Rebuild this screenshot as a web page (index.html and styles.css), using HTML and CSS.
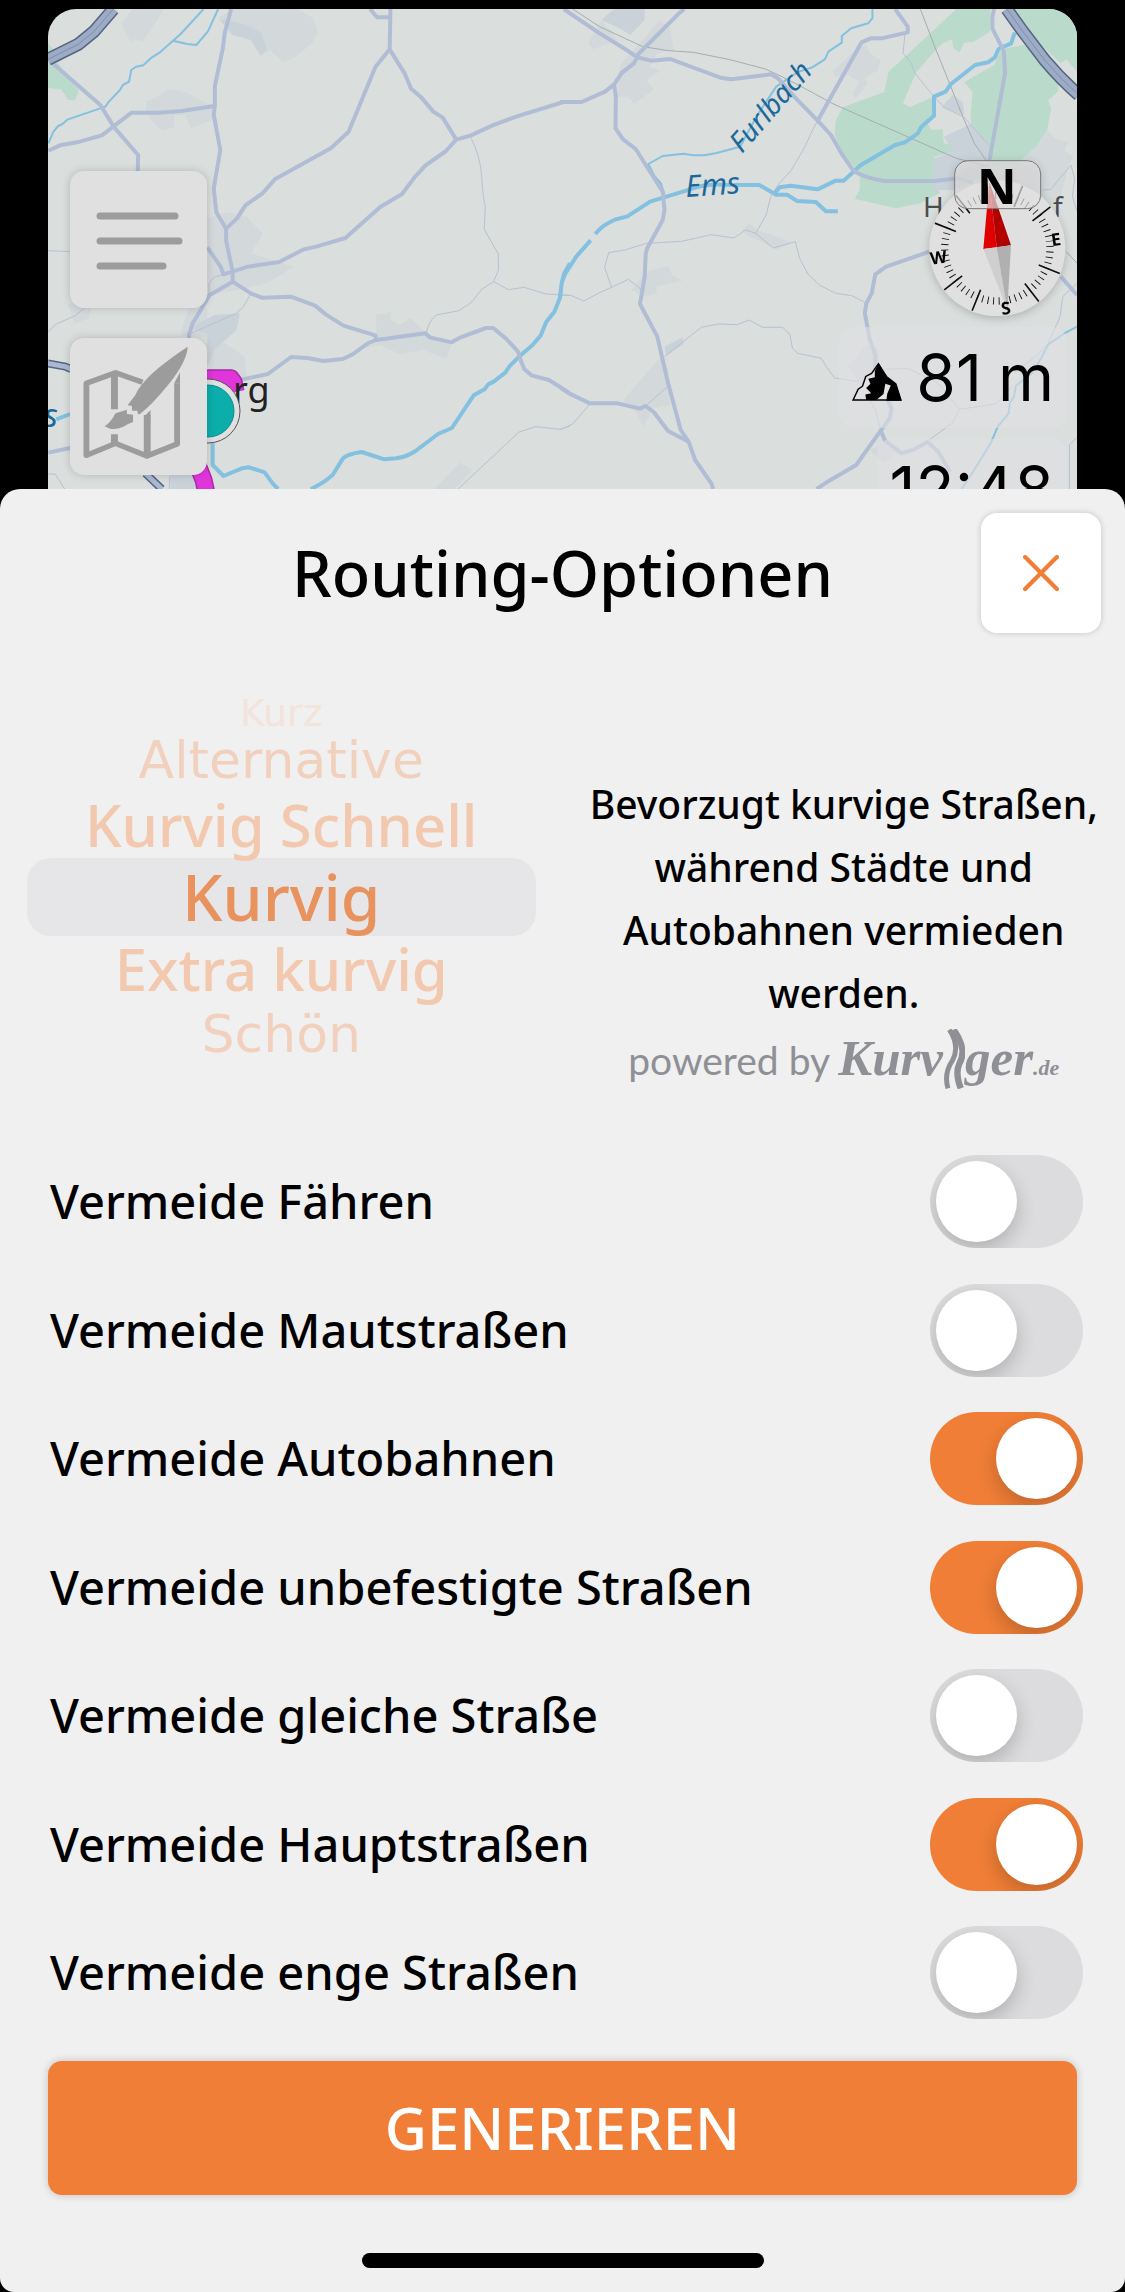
FILE: index.html
```html
<!DOCTYPE html>
<html lang="de">
<head>
<meta charset="utf-8">
<meta name="viewport" content="width=device-width, initial-scale=1">
<title>Routing-Optionen</title>
<link rel="stylesheet" href="styles.css">
</head>
<body>
<div class="stage">
  <div class="map">
    <svg class="map-canvas" viewBox="48 9 1029 480" preserveAspectRatio="xMidYMin slice" aria-hidden="true">
      <svg x="0" y="0" width="570" height="500" viewBox="0 0 1568 1500" preserveAspectRatio="none">
        <g class="forest">
          <path d="M132 130L150 150L175 135L205 150L160 190L217 270L207 300H188L168 268L132 264Z"/>
        </g>
        <g class="town">
          <path d="M333 70L365 27H450L430 65L402 108L392 125L372 118L358 125Z"/>
          <path d="M600 55L640 27H820L862 55L875 100L858 130L812 172L780 187L742 150L716 172L712 135L680 105L640 105Z"/>
          <path d="M402 305L440 285L466 266L515 278L560 305L590 318L585 360L525 385L510 345L480 345V380L446 392L425 370L402 340Z"/>
          <path d="M570 655L625 637L680 650L723 702L690 760L808 800L735 850L650 870L575 885Z"/>
          <path d="M185 910H255L245 955L205 970Z"/>
          <path d="M500 985L520 925H570V1010H500Z"/>
          <path d="M570 1030H620L672 1070L678 1130L590 1200Z"/>
          <path d="M1035 945L1075 935V960L1100 975L1130 955L1170 1000L1242 1030L1228 1077L1165 1050L1100 1062L1045 1035L1000 1045L1035 1010Z"/>
          <path d="M1195 1467L1265 1388L1300 1410L1250 1467Z"/>
        </g>
        <g class="town-core">
          <path d="M620 60L680 75L720 100L735 150L715 165L690 120L640 105L605 60Z"/>
          <path d="M520 985L590 945L660 940L650 990L590 1050L570 1100V1000Z"/>
          <path d="M466 1425H530L545 1467H470Z"/>
        </g>
        <g class="minor">
          <path d="M1295 412Q1322 470 1325 530Q1328 590 1335 620L1332 688L1371 762V810L1358 845L1325 868L1296 908L1262 932L1200 945Q1180 962 1172 1000"/>
          <path d="M1358 845L1398 869L1442 862L1502 882L1568 886"/>
          <path d="M132 752L193 755M132 995L155 972L205 948L235 922M575 885V850L590 830L615 825"/>
          <path d="M520 1003L650 940L668 922L690 882M1260 1467L1428 1296L1472 1280L1540 1288L1568 1278M132 1422H152L178 1467M466 1430V1467"/>
        </g>
        <g class="stream">
          <path d="M560 27L497 102L476 122L440 157L418 172L394 196L375 200L361 210L355 245L338 255L330 270L297 308L290 320L185 359L172 372L160 378L147 395L133 430"/>
          <path d="M600 27L572 94L540 135L515 132L476 122"/>
        </g>
        <g class="river">
          <path d="M1568 790L1552 820L1545 850L1540 895L1525 935L1503 965L1487 1007L1465 1035L1433 1065L1403 1097L1390 1118L1358 1145L1343 1153L1333 1168L1303 1186L1243 1284L1205 1302L1143 1353Q1120 1370 1090 1375L1057 1378L995 1356Q955 1362 943 1376L915 1425Q890 1450 855 1467"/>
          <path d="M585 1330V1395L615 1428L665 1405L685 1402L728 1417L750 1450L765 1467"/>
          <path d="M155 1258L193 1242"/>
        </g>
        <g class="road">
          <path d="M145 190L276 315L314 382L380 465L379 515M133 452L165 436L212 427L280 406L362 338H435L500 333L590 318"/>
          <path d="M636 27L618 100L613 145L591 258V318L588 345L606 450L588 565L595 637L622 686V722L640 815V845L577 885L530 970L520 1003V1015"/>
          <path d="M622 686L652 655L675 616L722 580L756 538L910 445L959 395L1033 200L1072 148L1074 27M1018 27L1037 52H1072"/>
          <path d="M1072 148L1113 220L1131 266L1157 290L1192 335L1218 353L1255 419L1227 453L1170 497L1142 530L1106 582L1046 621L950 714L870 740L836 748L768 786L682 800L615 823L607 800L570 742"/>
          <path d="M1255 419L1296 406L1355 376L1420 350L1550 306H1568"/>
          <path d="M640 845L690 880L720 893L800 890L867 917L897 944L945 977L1032 1006L1035 1020L1170 1000L1182 1012L1242 1027L1265 1013L1337 984H1357L1393 1017L1425 1055L1432 1080L1442 1107L1462 1126L1510 1140L1568 1180"/>
          <path d="M1035 1020L1013 1029L970 1063L943 1077L890 1083L845 1074L801 1071L737 1122L660 1140M133 1358L193 1344"/>
        </g>
        <g class="casing">
          <path d="M132 178L215 133L258 95L312 27"/>
        </g>
        <g class="motorway">
          <path d="M132 178L215 133L258 95L312 27"/>
        </g>
        <g class="lane"><path d="M132 178L215 133L258 95L312 27"/></g>
        <g class="casing casing-slim"><path d="M132 1090L180 1100L195 1107M400 1420L445 1467"/></g>
        <g class="motorway motorway-slim"><path d="M132 1090L180 1100L195 1107M400 1420L445 1467"/></g>
        <path class="track" d="M520 1160L575 1135H635L643 1147L648 1175M540 1385L560 1440L568 1480"/>
        <path class="track-fill" d="M520 1160L575 1135H635L643 1147L648 1175M540 1385L560 1440L568 1480"/>
      </svg>
      <svg x="560" y="0" width="565" height="500" viewBox="0 0 1568 1500" preserveAspectRatio="none">
        <g class="forest">
          <path d="M1100 27H1195L1193 95L1148 125L1122 128L1108 158L1092 145L1088 118L1062 130L1030 165L990 215L975 250L952 310L970 322L1038 290L1040 345L1020 370L1030 390L1062 388L1065 430L1092 435V455L1038 470V560L1055 578L1000 610L932 625L818 596L832 570V520L785 460L762 405L765 362L785 322L900 276L912 215Z"/>
          <path d="M1225 148L1285 135L1330 160L1385 220L1382 275L1355 300L1363 325L1352 390L1355 420L1320 445L1330 470L1270 488L1215 512L1150 485L1142 440L1140 340L1145 275L1122 247L1205 195Z"/>
          <path d="M1258 27H1435V215L1405 178L1390 190L1330 130Z"/>
        </g>
        <g class="town">
          <path d="M170 190L230 120L275 60L305 80L315 150L270 160L250 200L278 212L240 240L260 270L205 312L190 290L160 290V235Z"/>
          <path d="M115 60L78 130L92 148L160 120Z"/>
          <path d="M758 212L830 140L850 135L860 160L890 180L882 210L845 235L855 250L820 295L812 280L830 245L800 225L765 232Z"/>
          <path d="M505 690L525 670L548 690L590 705L640 728L600 750L560 725L515 705Z"/>
          <path d="M200 870L235 820L270 805L300 798L312 825L340 842L265 860L270 880L235 890Z"/>
          <path d="M175 1200L285 1065L300 1110L305 1215L260 1225L230 1280L213 1240Z"/>
          <path d="M1320 440L1350 390L1375 418L1410 425L1400 450L1425 470L1410 500L1390 590L1330 640H1200L1180 500L1270 490Z"/>
          <path d="M800 1100L850 1035L885 1050V1180L830 1150ZM860 1350L900 1330L940 1360L900 1390Z"/>
        </g>
        <g class="town-core">
          <path d="M115 60L150 27H235V60L195 105L165 85Z"/>
          <path d="M1058 322L1090 285L1118 308L1122 345Z"/>
          <path d="M1065 410L1140 372L1190 430V520L1100 570H1038V475L1092 455Z"/>
          <path d="M290 1040L340 1012L345 1030L295 1068Z"/>
        </g>
        <g class="minor">
          <path d="M715 362Q695 400 680 440L642 510L605 555L585 590L572 645L543 700L515 690L482 714L420 704L338 724L240 730L180 750L135 758L124 802L143 862L110 878L66 903L30 886L0 885M143 862L190 838L225 868"/>
          <path d="M543 700L592 744L653 725L665 775L688 822L720 855L765 880L810 887L848 908"/>
          <path d="M0 1290L35 1272L83 1212M235 1220L298 1160M290 1070L392 982L440 972L492 974L525 960L562 982H618L638 1003L645 1045L660 1060L725 1075L738 1098L762 1134L830 1145"/>
          <path d="M958 95L952 160L975 190L985 220L1038 290L1070 325L1120 350L1190 435M1340 570L1362 568L1418 495L1428 535L1422 590L1440 650M1435 850L1395 890L1388 950L1355 1030L1330 1060L1260 1120M905 1108L965 1105L1050 1150L1108 1228L1210 1212L1255 1160M1108 1228L1088 1270L1022 1322M1435 1312L1414 1335V1467M850 1180L875 1230L890 1290"/>
        </g>
        <g class="rail">
          <path d="M35 27L110 80L230 140Q300 155 370 157Q470 175 570 207Q640 240 755 310L1100 475L1190 500M1000 27L1040 140L1118 350L1150 430L1185 485M1405 755L1435 790"/>
        </g>
        <g class="stream">
          <path d="M867 27V55L855 70L808 85L782 108V128L745 155L735 178L700 202L660 216L600 260L545 350L500 440L432 460L400 466H370L343 461L285 468L245 492L262 528L280 550L290 585"/>
          <path d="M1435 980L1400 1000L1355 1033L1335 1075L1310 1120L1265 1158L1260 1190L1248 1210L1245 1240L1215 1280L1195 1330L1155 1400L1115 1467"/>
        </g>
        <g class="river">
          <path d="M0 895L2 855L15 820L45 770L85 721M98 702Q115 680 133 670L155 658L187 649L250 605L350 572Q400 550 450 554L553 555L600 584H630L658 603L710 606L738 634H771"/>
          <path d="M593 582L610 562L640 557L715 568L765 542H787L835 495L930 435L957 427L993 400L1003 380L1038 347V290L1070 275L1085 252L1152 195L1188 187L1207 172L1217 147L1252 130L1262 98"/>
        </g>
        <g class="road">
          <path d="M10 27L110 100L185 150L215 172L253 182L306 177L445 233L475 238L585 223L605 235L650 290L715 362L752 405L785 467L815 513Q850 535 900 543H1038L1105 535L1145 548"/>
          <path d="M215 165L330 40L345 27M215 172L205 190L172 218L150 253L125 275L60 306H0M150 253L155 290L154 385L175 418L210 447L285 575L290 630L285 660L242 745L238 760L235 830L222 912L270 1010L300 1150L335 1290L357 1325L375 1380L420 1450L425 1467"/>
          <path d="M0 1162L25 1180L83 1210H160L222 1226L237 1218L260 1236L300 1293L357 1325"/>
          <path d="M930 27L965 80V97L892 115H862L837 127L825 150L715 362M1205 27L1200 50V85L1232 155L1235 220L1192 480M1025 755L905 800L875 823L865 880L850 910L846 940L860 1020L875 1065V1120L920 1225L915 1255L890 1292L822 1395L740 1447L712 1467M890 1292L902 1322L948 1360L983 1348L1020 1326L1050 1355L1082 1415M1390 830L1435 885"/>
        </g>
        <g class="casing"><path d="M1240 27L1285 95L1345 180Q1390 238 1440 285"/></g>
        <g class="motorway"><path d="M1240 27L1285 95L1345 180Q1390 238 1440 285"/></g>
        <g class="lane"><path d="M1240 27L1285 95L1345 180Q1390 238 1440 285"/></g>
      </svg>
      <text class="water-label" x="686" y="197" font-size="30" transform="rotate(-4 686 197)">Ems</text>
      <text class="water-label" x="742" y="154" font-size="28" transform="rotate(-49 742 154)">Furlbach</text>
      <text class="water-label" x="44" y="427" font-size="32">s</text>
      <text class="place-label" x="923" y="217" font-size="28">H</text>
      <text class="place-label" x="1053" y="217" font-size="28">f</text>
      <text class="place-label place-label-strong" x="233" y="403" font-size="36">rg</text>
      <circle cx="208" cy="411" r="32" fill="#dfe0df" stroke="#555" stroke-width="1"/>
      <circle cx="208" cy="411" r="26" fill="#0baeab" stroke="#0b8d8d" stroke-width="1"/>
    </svg>

    <div class="map-tools">
      <button class="tool" type="button" aria-label="Menü">
        <svg viewBox="0 0 137 137" aria-hidden="true"><path d="M30 45H105M30 70H109M30 95H93" fill="none" stroke="#9c9c9c" stroke-width="7" stroke-linecap="round"/></svg>
      </button>
      <button class="tool" type="button" aria-label="Route zeichnen">
        <svg viewBox="193 1014 376 411" preserveAspectRatio="none" aria-hidden="true">
          <g fill="none" stroke="#9c9c9c" stroke-width="16" stroke-linejoin="round">
            <path d="M392 1147L318 1118L238 1150V1366L318 1330L404 1368L487 1332V1150"/>
            <path stroke-width="19" d="M315 1120V1228M315 1303V1332M405 1366V1245"/>
          </g>
          <g fill="#9c9c9c">
            <path d="M479 1150L495 1117V1150ZM396 1250L414 1230V1250Z"/>
            <path d="M516 1040Q514 1085 462 1155Q415 1218 384 1243L379 1241L378 1232H363V1218L351 1216L372 1186Q385 1150 440 1100Q482 1064 516 1040Z"/>
            <path d="M318 1240L349 1229V1242L366 1244V1266Q350 1272 338 1281Q318 1290 303 1286L288 1279Q303 1270 318 1240Z"/>
          </g>
        </svg>
      </button>
    </div>

    <div class="map-info">
      <svg class="compass" viewBox="75 45 426 483" role="img" aria-label="Kompass">
        <circle cx="292" cy="325" r="204" fill="#e0e0e0"/>
        <g transform="rotate(-8 292 325)" stroke="#111" fill="none">
          <circle cx="292" cy="325" r="158" stroke-width="22" pathLength="360" stroke-dasharray="1 5" stroke-dashoffset="0.5"/>
          <path stroke-width="5" d="M359 209L393 150M408 258L467 224M408 392L467 426M359 441L393 500M225 441L191 500M176 392L117 426M176 258L117 224M225 209L191 150"/>
        </g>
        <path fill="#e00000" d="M268 125L250 327L290 322Z"/>
        <path fill="#b20000" d="M268 125L290 322L333 316Z"/>
        <path fill="#cfcfcf" d="M250 327L290 322L322 508Z"/>
        <path fill="#b0b0b0" d="M290 322L333 316L322 508Z"/>
        <g class="compass-letters" font-size="52" text-anchor="middle">
          <text x="468" y="317" transform="rotate(-8 468 298)">E</text>
          <text x="115" y="371" transform="rotate(-8 115 352)">W</text>
          <text x="318" y="523" transform="rotate(-8 318 505)">S</text>
        </g>
        <rect x="164" y="62" width="258" height="144" rx="40" fill="#e0e0e0" fill-opacity=".7" stroke="#777" stroke-width="3"/>
        <text class="compass-letters" x="290" y="192" font-size="146" text-anchor="middle">N</text>
      </svg>
      <div class="readout">
        <svg class="peak" viewBox="813 1085 138 116" preserveAspectRatio="none" aria-hidden="true">
          <path d="M816 1198L830 1166L842 1157L851 1128L867 1119L886 1090L908 1128L934 1150L948 1198Z" fill="#e2e2e2" stroke="#000" stroke-width="4"/>
          <path d="M886 1088L908 1128L934 1150L950 1200H908L910 1180L920 1155L905 1150L900 1180L880 1198H852L850 1182L866 1178L852 1162L864 1150L858 1135L876 1130V1112Z"/>
        </svg>
        <span>81&#8197;m</span>
      </div>
      <div class="readout"><span>12:48</span></div>
    </div>
  </div>
</div>

<main class="sheet">
  <header class="sheet-head">
    <h1>Routing-Optionen</h1>
    <button class="close" type="button" aria-label="Schließen">
      <svg viewBox="0 0 34 34" aria-hidden="true"><path d="M2 2L32 32M32 2L2 32" fill="none" stroke="#f07e36" stroke-width="4" stroke-linecap="round"/></svg>
    </button>
  </header>

  <section class="profile">
    <fieldset class="wheel">
      <legend>Profil</legend>
      <label class="turn turn-far"><input type="radio" name="profil"><span>Kurz</span></label>
      <label class="turn turn-mid"><input type="radio" name="profil"><span>Alternative</span></label>
      <label class="turn turn-near"><input type="radio" name="profil"><span>Kurvig Schnell</span></label>
      <label class="turn turn-active"><input type="radio" name="profil" checked><span>Kurvig</span></label>
      <label class="turn turn-near"><input type="radio" name="profil"><span>Extra kurvig</span></label>
      <label class="turn turn-mid"><input type="radio" name="profil"><span>Schön</span></label>
    </fieldset>
    <div class="about">
      <p>Bevorzugt kurvige Straßen, während Städte und Autobahnen vermieden werden.</p>
      <div class="credit">
        <span class="credit-by">powered by</span>
        <span class="credit-brand">Kurv<svg viewBox="0 0 62 180" preserveAspectRatio="none" aria-hidden="true"><path d="M18 2C40 38 40 68 27 94C8 124 6 150 14 178" fill="none" stroke="#8f8f96" stroke-width="14"/><path d="M30 2C60 48 60 78 46 104C36 128 42 156 50 178" fill="none" stroke="#8f8f96" stroke-width="18"/></svg>ger<small>.de</small></span>
      </div>
    </div>
  </section>

  <div class="options">
    <label class="option"><span>Vermeide Fähren</span><input type="checkbox" role="switch"></label>
    <label class="option"><span>Vermeide Mautstraßen</span><input type="checkbox" role="switch"></label>
    <label class="option"><span>Vermeide Autobahnen</span><input type="checkbox" role="switch" checked></label>
    <label class="option"><span>Vermeide unbefestigte Straßen</span><input type="checkbox" role="switch" checked></label>
    <label class="option"><span>Vermeide gleiche Straße</span><input type="checkbox" role="switch"></label>
    <label class="option"><span>Vermeide Hauptstraßen</span><input type="checkbox" role="switch" checked></label>
    <label class="option"><span>Vermeide enge Straßen</span><input type="checkbox" role="switch"></label>
  </div>

  <button class="generate" type="button">GENERIEREN</button>
  <div class="home-bar"></div>
</main>
</body>
</html>
```

FILE: styles.css
```css
* { box-sizing: border-box; }

body {
  margin: 0;
  min-height: 100vh;
  display: flex;
  flex-direction: column;
  background: #000;
  color: #000;
  font-family: "Noto Sans", "Open Sans", sans-serif;
  font-weight: 500;
}

button { font: inherit; border: 0; padding: 0; }

/* Map behind the sheet */
.stage { padding: 9px 48px 0; }

.map {
  position: relative;
  height: 480px;
  overflow: hidden;
  border-radius: 28px 28px 0 0;
  background: #dadedd;
}

.map-canvas { display: block; width: 100%; height: 100%; }
.map-canvas path { vector-effect: non-scaling-stroke; }
.forest { fill: #badacb; }
.town { fill: #d3d8da; }
.town-core { fill: #cad2d9; }
.minor, .rail, .stream, .river, .road, .casing, .motorway, .lane, .track, .track-fill {
  fill: none;
  stroke-linejoin: round;
}
.minor { stroke: #b9c0d2; stroke-width: 1px; }
.rail { stroke: #a5adb0; stroke-width: 1px; }
.stream { stroke: #84c0df; stroke-width: 2px; }
.river { stroke: #84c0e0; stroke-width: 4px; }
.road { stroke: #b0bdd5; stroke-width: 4px; }
.casing { stroke: #56657f; stroke-width: 13px; }
.motorway { stroke: #9cabc6; stroke-width: 10px; }
.lane { stroke: #7f8fad; stroke-width: 1px; }
.casing-slim { stroke-width: 8px; }
.motorway-slim { stroke: #a9b8d3; stroke-width: 5px; }
.track { stroke: #a82aa4; stroke-width: 18px; }
.track-fill { stroke: #e035da; stroke-width: 15px; }
.water-label { fill: #1d6898; font-style: italic; font-weight: 400; }
.place-label { fill: #4a4d50; font-weight: 400; }
.place-label-strong { fill: #222; }

.map-tools {
  position: absolute;
  top: 162px;
  left: 22px;
  display: flex;
  flex-direction: column;
  gap: 30px;
}
.tool {
  width: 137px;
  height: 137px;
  border-radius: 14px;
  background: #e0e0e0;
  box-shadow: 0 0 8px rgba(0, 0, 0, .18);
}
.tool svg { display: block; width: 100%; height: 100%; }

.map-info {
  position: absolute;
  top: 146px;
  right: 10px;
  display: flex;
  flex-direction: column;
  align-items: flex-end;
  gap: 11px;
}
.compass {
  width: 142px;
  height: 161px;
  filter: drop-shadow(0 2px 4px rgba(0, 0, 0, .2));
}
.compass-letters { font-family: "Open Sans", sans-serif; font-weight: 700; }
.readout {
  display: flex;
  align-items: center;
  gap: 14px;
  height: 101px;
  padding: 0 13px;
  border-radius: 14px;
  background: rgba(224, 224, 226, .6);
  font: 400 64px/101px Inter, "Liberation Sans", sans-serif;
}
.peak { width: 50px; height: 39px; margin-top: 8px; }

/* Sheet */
.sheet {
  flex: 1;
  display: flex;
  flex-direction: column;
  padding: 24px 0;
  border-radius: 20px 20px 14px 14px;
  background: #f0f0f0;
}

.sheet-head {
  display: grid;
  grid-template-columns: 120px 1fr 120px;
  align-items: center;
  padding: 0 24px;
}
h1 {
  grid-column: 2;
  margin: 0;
  font-size: 63px;
  line-height: 120px;
  font-weight: 500;
  text-align: center;
}
.close {
  display: grid;
  place-items: center;
  height: 120px;
  border-radius: 16px;
  background: #fff;
  box-shadow: 0 0 6px rgba(0, 0, 0, .18);
}
.close svg { width: 36px; height: 36px; }

.profile {
  display: grid;
  grid-template-columns: 1fr 1fr;
  padding-top: 65px;
}

.wheel {
  min-width: 0;
  margin: 0;
  padding: 0 27px;
  border: 0;
  text-align: center;
}
.wheel legend,
.wheel input {
  position: absolute;
  width: 1px;
  height: 1px;
  margin: 0;
  opacity: 0;
  overflow: hidden;
}
.turn { display: block; white-space: nowrap; }
.turn-far {
  color: #f3e4db;
  font: 400 38px/30px "DejaVu Sans", sans-serif;
}
.turn-mid {
  color: #f1d1bd;
  font: 400 52px/64px "DejaVu Sans", sans-serif;
}
.turn-near { color: #f2c9af; font-size: 58px; line-height: 66px; }
.turn-active {
  border-radius: 24px;
  background: #e6e6e9;
  color: #e8925e;
  font-size: 64px;
  line-height: 78px;
}

.about { padding: 74px 0 0; text-align: center; }
.about p { margin: 0; padding: 0 24px; font-size: 39px; line-height: 63px; }
.credit {
  display: flex;
  justify-content: center;
  align-items: baseline;
  gap: 8px;
  height: 68px;
  color: #8f8f96;
  line-height: 68px;
}
.credit-by { font-family: Lato, sans-serif; font-size: 39px; font-weight: 400; }
.credit-brand {
  font-family: "Liberation Serif", serif;
  font-size: 51px;
  font-style: italic;
  font-weight: 700;
}
.credit-brand svg { width: 22px; height: 60px; vertical-align: -14px; }
.credit-brand small { font-size: 22px; }

.options {
  flex: 1;
  display: flex;
  flex-direction: column;
  justify-content: space-between;
  padding: 63px 42px 42px 50px;
}
.option {
  display: flex;
  align-items: center;
  justify-content: space-between;
  font-size: 47px;
  line-height: 93px;
}
.option input {
  appearance: none;
  display: flex;
  width: 153px;
  height: 93px;
  margin: 0;
  padding: 6px;
  border-radius: 47px;
  background: #dcdcde;
  overflow: hidden;
}
.option input::before {
  content: "";
  width: 81px;
  height: 81px;
  border-radius: 50%;
  background: #fff;
  box-shadow: 0 8px 20px rgba(0, 0, 0, .2);
}
.option input:checked { justify-content: flex-end; background: #f07e36; }

.generate {
  margin: 0 48px;
  border-radius: 14px;
  background: #f07e36;
  box-shadow: 0 0 8px rgba(0, 0, 0, .2);
  color: #fff;
  font-size: 58px;
  line-height: 134px;
}
.home-bar {
  align-self: center;
  width: 402px;
  height: 15px;
  margin-top: 58px;
  border-radius: 8px;
  background: #000;
}
```
